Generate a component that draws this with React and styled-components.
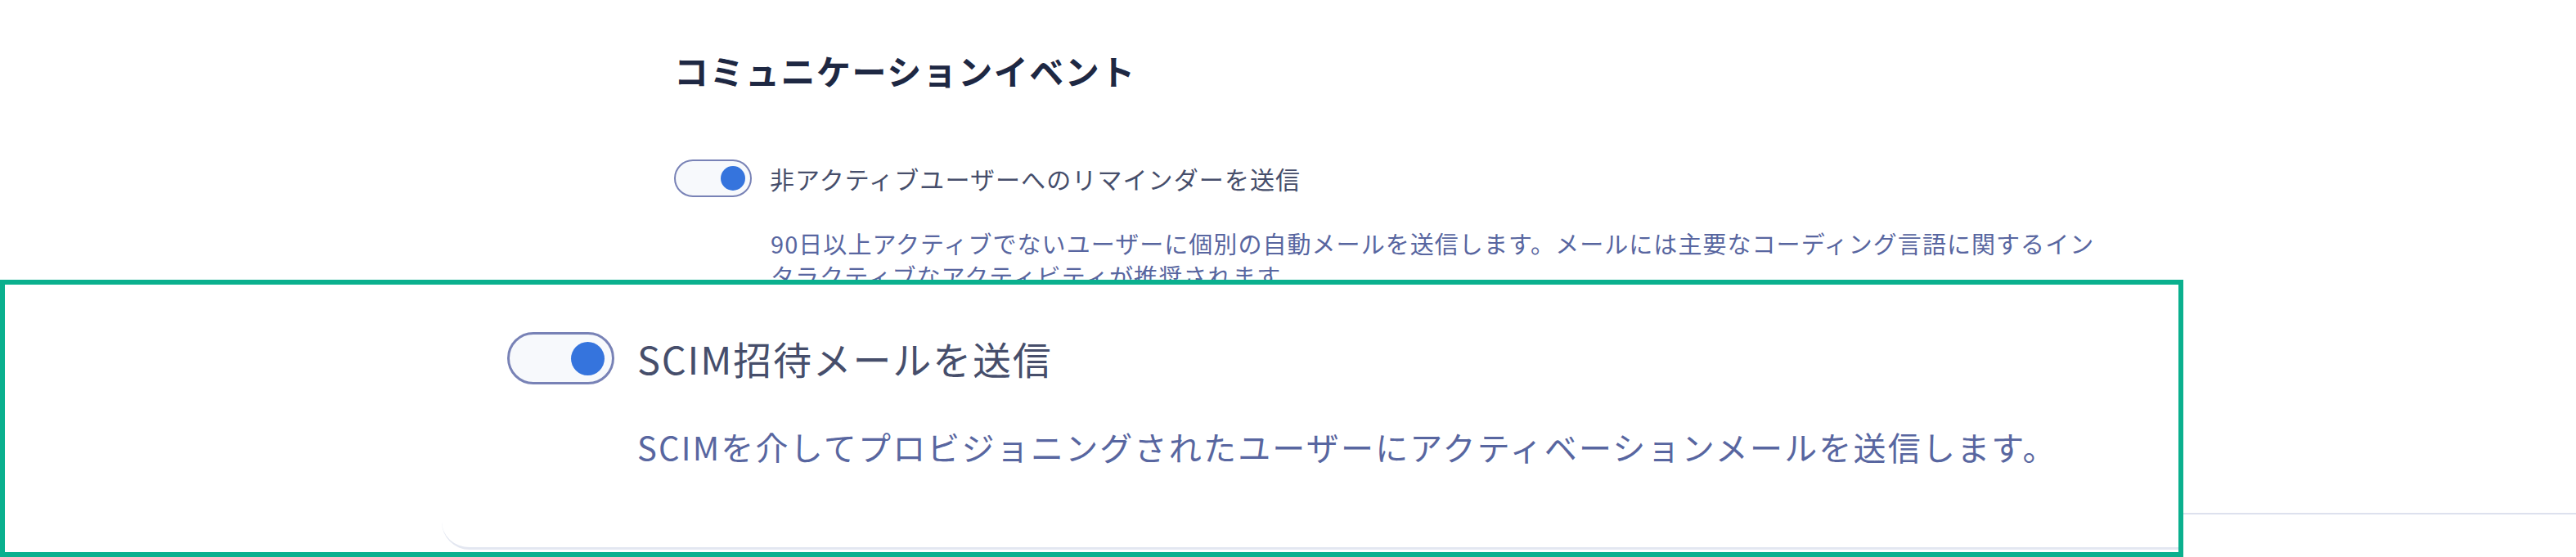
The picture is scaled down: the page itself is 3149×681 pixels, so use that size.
import React from "react"
import styled, { createGlobalStyle } from "styled-components"

const GlobalStyle = createGlobalStyle`
  html, body {
    margin: 0;
    padding: 0;
    background: #ffffff;
  }
  body {
    font-family: "Noto Sans CJK JP", "Noto Sans", sans-serif;
  }
  * {
    box-sizing: border-box;
  }
`

const Page = styled.div`
  position: relative;
  width: 3149px;
  height: 681px;
  overflow: hidden;
  background: #ffffff;
`

const SettingsCard = styled.section`
  margin-left: 772px;
  height: 629px;
  padding: 61px 0 0 52px;
  border-bottom: 2px solid #dde1ee;
  border-bottom-left-radius: 22px;
`

const SectionTitle = styled.h2`
  margin: 0 0 84px;
  font-size: 42px;
  line-height: 50px;
  font-weight: 700;
  letter-spacing: 1.5px;
  color: #1e2843;
`

const Row = styled.div`
  display: flex;
  align-items: center;
  gap: ${p => p.$gap}px;
`

const Switch = styled.span`
  position: relative;
  flex: none;
  display: inline-flex;
  align-items: center;
  justify-content: flex-end;
  width: ${p => p.$w}px;
  height: ${p => p.$h}px;
  padding-right: ${p => p.$inset}px;
  border: ${p => p.$bw}px solid #7882b6;
  border-radius: ${p => p.$h}px;
  background: #f7f9fc;
`

const Knob = styled.span`
  width: ${p => p.$size}px;
  height: ${p => p.$size}px;
  border-radius: 50%;
  background: #3574dd;
`

const Label = styled.span`
  font-size: ${p => p.$size}px;
  line-height: 1.3;
  letter-spacing: ${p => p.$ls}px;
  font-weight: 400;
  color: #464e6b;
  white-space: nowrap;
`

const Description = styled.p`
  margin: ${p => p.$top}px 0 0 ${p => p.$indent}px;
  max-width: ${p => p.$max}px;
  font-size: ${p => p.$size}px;
  line-height: ${p => p.$lh}px;
  letter-spacing: ${p => p.$ls}px;
  font-weight: 400;
  color: #5866a0;
`

const Callout = styled.div`
  position: absolute;
  left: 0;
  top: 342px;
  width: 2669px;
  height: 339px;
  border: 6px solid #0ab08e;
  background: #ffffff;
  overflow: hidden;
`

const MagnifiedCard = styled.div`
  margin-left: 534px;
  width: 2400px;
  height: 324px;
  padding: 58px 0 0 80px;
  border-bottom: 3px solid #e3e7f1;
  border-bottom-left-radius: 34px;
`

const App = () => (
  <>
    <GlobalStyle />
    <Page>
      <SettingsCard>
        <SectionTitle>コミュニケーションイベント</SectionTitle>
        <Row $gap={22}>
          <Switch $w={95} $h={46} $bw={2} $inset={6}>
            <Knob $size={30} />
          </Switch>
          <Label $size={30} $ls={1.1}>非アクティブユーザーへのリマインダーを送信</Label>
        </Row>
        <Description $top={36} $indent={118} $max={1645} $size={29} $lh={40} $ls={1.05}>
          90日以上アクティブでないユーザーに個別の自動メールを送信します。メールには主要なコーディング言語に関するインタラクティブなアクティビティが推奨されます
        </Description>
      </SettingsCard>

      <Callout>
        <MagnifiedCard>
          <Row $gap={28}>
            <Switch $w={131} $h={64} $bw={3} $inset={9}>
              <Knob $size={41} />
            </Switch>
            <Label $size={47} $ls={1.8}>SCIM招待メールを送信</Label>
          </Row>
          <Description $top={48} $indent={159} $max={1950} $size={40} $lh={56} $ls={2.2}>
            SCIMを介してプロビジョニングされたユーザーにアクティベーションメールを送信します。
          </Description>
        </MagnifiedCard>
      </Callout>
    </Page>
  </>
)

export default App
